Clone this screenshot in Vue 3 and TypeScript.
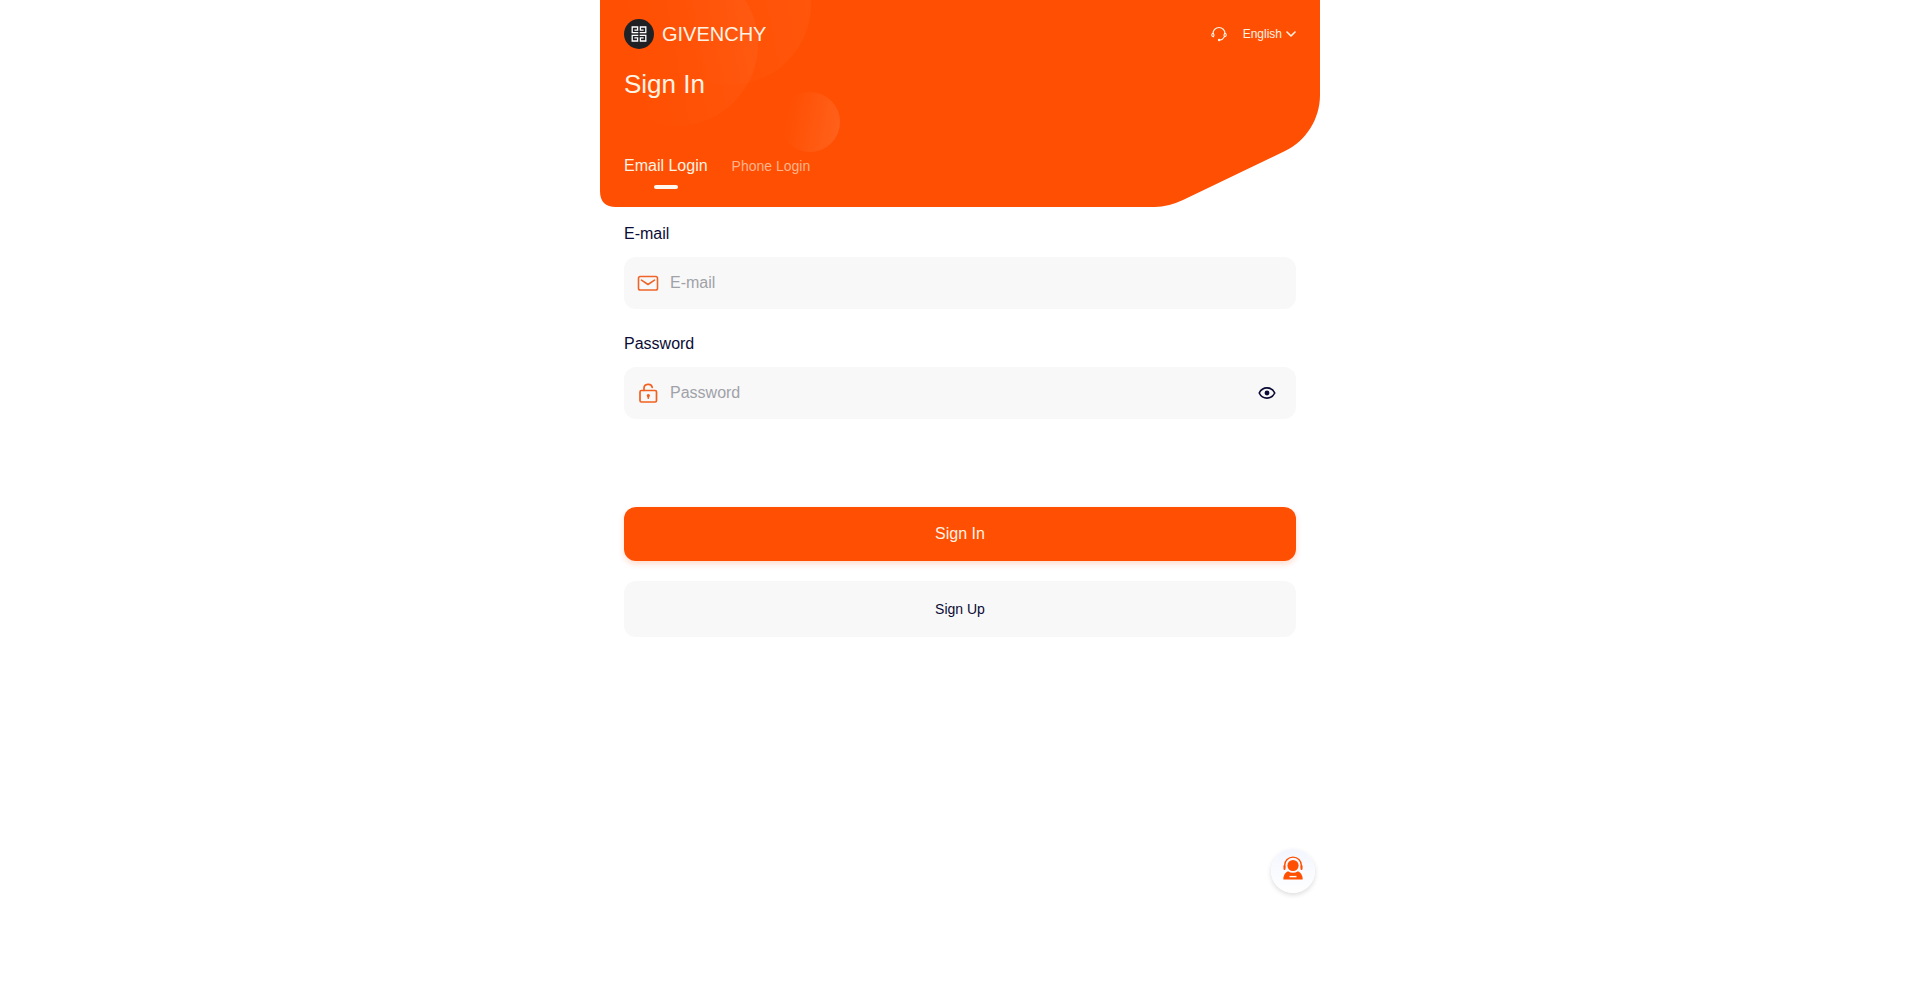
<script setup lang="ts">
import { ref } from 'vue'

type LoginMode = 'email' | 'phone'

const tabs: { id: LoginMode; label: string }[] = [
  { id: 'email', label: 'Email Login' },
  { id: 'phone', label: 'Phone Login' },
]

const mode = ref<LoginMode>('email')
const account = ref('')
const password = ref('')
const showPassword = ref(false)
</script>

<template>
  <main class="page">
    <header class="hero">
      <svg class="hero-shape" viewBox="0 0 720 207" preserveAspectRatio="none" aria-hidden="true">
        <defs>
          <linearGradient id="bubble" x1="0" y1="0.4" x2="1" y2="0.6">
            <stop offset="0.1" stop-color="#fff" stop-opacity="0" />
            <stop offset="1" stop-color="#fff" stop-opacity="0.1" />
          </linearGradient>
          <linearGradient id="haze" x1="0" y1="0.6" x2="1" y2="0.4">
            <stop offset="0.2" stop-color="#fff" stop-opacity="0" />
            <stop offset="1" stop-color="#fff" stop-opacity="0.04" />
          </linearGradient>
          <clipPath id="panel">
            <path d="M0 0H720V95C720 119 706 141 685 151L583 200Q568 207 555 207H16Q0 207 0 191Z" />
          </clipPath>
        </defs>
        <g clip-path="url(#panel)">
          <path d="M0 0H720V207H0Z" fill="#ff4f02" />
          <circle cx="130" cy="4" r="81" fill="url(#haze)" />
          <circle cx="76" cy="44" r="82" fill="url(#haze)" />
          <circle cx="210" cy="122" r="30" fill="url(#bubble)" />
        </g>
      </svg>

      <div class="topbar">
        <div class="brand">
          <svg class="brand-logo" viewBox="0 0 30 30" aria-hidden="true">
            <circle cx="15" cy="15" r="15" fill="#202124" />
            <g fill="none" stroke="#fff" stroke-width="1.3">
              <path d="M10.4 11.200H13.600V8H8.200V13.700H14.300" />
              <path d="M19.600 11.200H16.400V8H21.800V13.700H15.700" />
              <path d="M10.400 18.800H13.600V22H8.200V16.300H14.300" />
              <path d="M19.600 18.800H16.400V22H21.800V16.300H15.700" />
            </g>
          </svg>
          <span>GIVENCHY</span>
        </div>
        <div class="tools">
          <button class="plain" type="button" aria-label="Customer service">
            <svg class="headset" viewBox="0 0 16 16" fill="none" stroke="currentColor" stroke-width="1.1" stroke-linecap="round" aria-hidden="true">
              <path d="M2 7.5a6 6 0 0 1 12 0" />
              <path d="M2.2 7.2C1.1 7.4.7 8.1.7 9s.5 1.6 1.8 1.8c.6-.9.6-2.5-.3-3.6ZM13.8 7.2c1.1.2 1.5.9 1.5 1.8s-.5 1.6-1.8 1.8c-.6-.9-.6-2.5.3-3.6Z" />
              <path d="M13.1 11c-.8 1.8-2.1 2.8-4 3" />
              <circle cx="8.1" cy="14" r="0.7" fill="currentColor" />
            </svg>
          </button>
          <button class="plain language" type="button">
            English
            <svg class="chevron" viewBox="0 0 10 8" fill="none" stroke="currentColor" stroke-width="1.6" stroke-linecap="round" stroke-linejoin="round" aria-hidden="true">
              <path d="M1 2l4 4 4-4" />
            </svg>
          </button>
        </div>
      </div>

      <h1>Sign In</h1>

      <nav class="tabs" aria-label="Login method">
        <button
          v-for="tab in tabs"
          :key="tab.id"
          type="button"
          class="plain tab"
          :class="{ active: mode === tab.id }"
          @click="mode = tab.id"
        >
          {{ tab.label }}
        </button>
      </nav>
    </header>

    <form class="form" @submit.prevent>
      <label for="account">E-mail</label>
      <div class="field">
        <svg class="field-icon" viewBox="0 0 22 22" fill="none" stroke="#ef6428" stroke-width="1.6" stroke-linecap="round" stroke-linejoin="round" aria-hidden="true">
          <rect x="1.5" y="4.5" width="19" height="13.5" rx="1.8" />
          <path d="M4.500 8.200l6.500 4.300 6.500-4.300" />
        </svg>
        <input id="account" v-model="account" type="text" placeholder="E-mail" />
      </div>

      <label for="password">Password</label>
      <div class="field">
        <svg class="field-icon" viewBox="0 0 22 22" fill="none" stroke="#f2601e" stroke-width="1.7" stroke-linecap="round" stroke-linejoin="round" aria-hidden="true">
          <rect x="3" y="8.5" width="16.500" height="11.500" rx="1.4" />
          <path d="M7 8.300V6.200c0-4.800 7.600-5.200 8.200-.8M11.300 13.900v2.200" />
          <circle cx="11.300" cy="13.600" r="0.800" fill="#f2601e" />
        </svg>
        <input id="password" v-model="password" :type="showPassword ? 'text' : 'password'" placeholder="Password" />
        <button class="plain eye" type="button" aria-label="Show password" @click="showPassword = !showPassword">
          <svg viewBox="0 0 18 18" aria-hidden="true">
            <path d="M2 9C5 2.900 13 2.900 16 9C13 15.100 5 15.100 2 9Z" fill="none" stroke="#0b0b35" stroke-width="1.500" stroke-linejoin="round" />
            <circle cx="9" cy="9" r="2.200" fill="#0b0b35" />
          </svg>
        </button>
      </div>

      <button class="submit" type="submit">Sign In</button>
      <button class="signup" type="button">Sign Up</button>
    </form>

    <button class="support" type="button" aria-label="Open support chat">
      <svg viewBox="0 0 20 24" aria-hidden="true">
        <path d="M1.600 12V9.500a8.400 8.400 0 0 1 16.800 0V12" fill="none" stroke="#ff4f02" stroke-width="1.400" />
        <path d="M1.500 10v3M18.500 10v3" stroke="#ff4f02" stroke-width="2" stroke-linecap="round" />
        <circle cx="10" cy="9.500" r="5.600" fill="#ff4f02" />
        <path d="M5 15.200Q10 18.200 15 15.200Q19.500 17 19.700 23.500H.3Q.5 17 5 15.200Z" fill="#ff4f02" />
        <path d="M6.500 20.600h7" stroke="#fff" stroke-width="1.400" />
      </svg>
    </button>
  </main>
</template>

<style>
body {
  margin: 0;
  background: #fff;
}
</style>

<style scoped>
.page {
  position: relative;
  box-sizing: border-box;
  max-width: 720px;
  min-height: 100vh;
  margin: 0 auto;
  font-family: "Liberation Sans", Arial, sans-serif;
  color: #0b0b35;
}

button,
input {
  font-family: inherit;
}

.plain {
  padding: 0;
  border: 0;
  background: none;
  color: inherit;
  cursor: pointer;
}

.hero {
  position: relative;
  isolation: isolate;
  padding: 19px 24px 18px;
  color: #fff3e4;
}

.hero-shape {
  position: absolute;
  z-index: -1;
  inset: 0;
  width: 100%;
  height: 100%;
}

.topbar,
.brand,
.tools,
.language,
.field {
  display: flex;
  align-items: center;
}

.topbar {
  justify-content: space-between;
}

.brand {
  gap: 8px;
  font-size: 20px;
  line-height: 30px;
}

.brand-logo {
  width: 30px;
  height: 30px;
}

.tools {
  gap: 16px;
}

.headset {
  display: block;
  width: 16px;
  height: 16px;
}

.language {
  gap: 4px;
  font-size: 12px;
  line-height: 16px;
}

.chevron {
  width: 10px;
  height: 8px;
}

h1 {
  margin: 20px 0 52px;
  font-size: 26px;
  font-weight: 400;
  line-height: 30px;
}

.tabs {
  display: flex;
  align-items: baseline;
  gap: 24px;
}

.tab {
  display: flex;
  flex-direction: column;
  align-items: center;
  gap: 4px;
  font-size: 14px;
  line-height: 20px;
  color: #ffb48c;
}

.tab.active {
  font-size: 16px;
  line-height: 30px;
  color: #fff3e4;
}

.tab.active::after {
  content: "";
  width: 24px;
  height: 4px;
  border-radius: 2px;
  background: #fff8ee;
}

.form {
  display: flex;
  flex-direction: column;
  padding: 16px 24px;
}

label {
  margin-bottom: 12px;
  font-size: 16px;
  line-height: 22px;
}

.field {
  gap: 11px;
  height: 52px;
  margin-bottom: 24px;
  padding: 0 19px 0 13px;
  border-radius: 12px;
  background: #f8f8f8;
}

.field-icon {
  flex: none;
  width: 22px;
  height: 22px;
}

input {
  flex: 1;
  min-width: 0;
  padding: 0;
  border: 0;
  outline: 0;
  background: transparent;
  font-size: 16px;
  line-height: 24px;
  color: #0b0b35;
}

input::placeholder {
  color: #a0a2a8;
  opacity: 1;
}

.eye,
.eye svg {
  display: block;
  width: 20px;
  height: 20px;
}

.submit,
.signup {
  border: 0;
  border-radius: 12px;
  cursor: pointer;
}

.submit {
  height: 54px;
  margin-top: 64px;
  background: #ff4f02;
  box-shadow: 0 3px 6px rgba(255, 79, 2, 0.2);
  font-size: 16px;
  color: #fff3e4;
}

.signup {
  height: 56px;
  margin-top: 20px;
  background: #f8f8f8;
  font-size: 14px;
  color: #0b0b35;
}

.support {
  position: absolute;
  right: 5px;
  bottom: 100px;
  display: grid;
  place-items: center;
  width: 44px;
  height: 44px;
  padding: 0 0 6px;
  border: 0;
  border-radius: 50%;
  background: linear-gradient(#f3f6ff, #fff);
  box-shadow: 0 2px 5px rgba(0, 0, 0, 0.14);
  cursor: pointer;
}

.support svg {
  width: 20px;
  height: 24px;
}
</style>
